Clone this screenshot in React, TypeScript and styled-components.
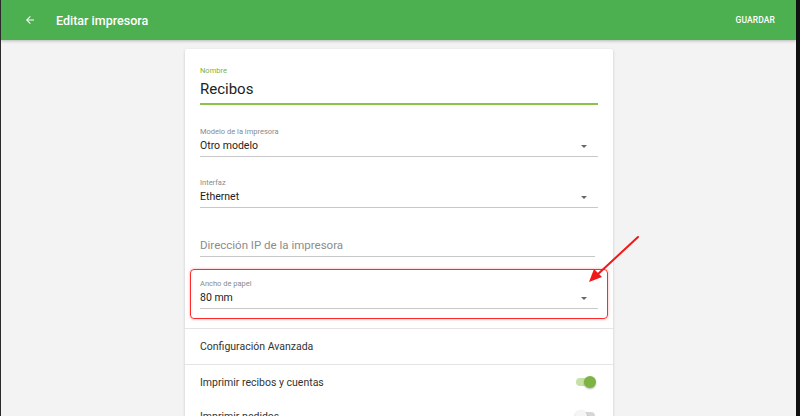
import React from 'react';
import styled, { createGlobalStyle } from 'styled-components';

const GlobalStyle = createGlobalStyle`
  html, body {
    margin: 0;
    padding: 0;
    height: 100%;
    overflow: hidden;
  }
  body {
    font-family: Roboto, "Noto Sans", Arial, sans-serif;
    background: #f3f3f3;
  }
`;

const Screen = styled.div`
  position: relative;
  width: 800px;
  height: 416px;
  box-sizing: border-box;
  border-left: 1px solid #2a2a2a;
  border-right: 4px solid #111;
  background: #f3f3f3;
  overflow: hidden;
  display: flex;
  flex-direction: column;
`;

const AppBar = styled.header`
  height: 40px;
  flex-shrink: 0;
  background: #4caf50;
  display: flex;
  align-items: center;
  padding: 0 20px 0 21px;
  box-shadow: 0 1px 3px rgba(0, 0, 0, 0.25);
  z-index: 2;
`;

const BackButton = styled.button`
  width: 16px;
  height: 16px;
  padding: 0;
  border: none;
  background: transparent;
  display: flex;
  align-items: center;
  justify-content: center;
  cursor: pointer;
`;

const Title = styled.h1`
  margin: 0 0 0 18px;
  font-size: 12.5px;
  font-weight: 500;
  color: #fff;
  flex: 1;
`;

const SaveButton = styled.button`
  border: none;
  background: transparent;
  color: #fff;
  font-family: Roboto, sans-serif;
  font-size: 8.5px;
  font-weight: 500;
  letter-spacing: 0.1px;
  padding: 0;
  margin-right: 1px;
  cursor: pointer;
`;

const Content = styled.main`
  flex: 1;
  display: flex;
  justify-content: center;
  padding: 9px 3px 0 4px;
`;

const Card = styled.section`
  width: 428px;
  background: #fff;
  box-shadow: 0 1px 3px rgba(0, 0, 0, 0.18);
  border-radius: 2px;
  display: flex;
  flex-direction: column;
  align-self: flex-start;
`;

const Form = styled.div`
  display: flex;
  flex-direction: column;
  padding: 16px 15px 19px;
`;

const Field = styled.div<{ $highlight?: boolean; $gap: number }>`
  position: relative;
  display: flex;
  flex-direction: column;
  margin-top: ${p => p.$gap}px;
  ${p => p.$highlight && `
    &::after {
      content: '';
      position: absolute;
      left: -10px;
      right: -10px;
      top: -9px;
      bottom: -10px;
      border: 1.5px solid #ff2a2a;
      border-radius: 4px;
      box-shadow: 0 0 3px rgba(255, 0, 0, 0.35);
      pointer-events: none;
    }
  `}
`;

const Label = styled.span<{ $focused?: boolean }>`
  font-size: 7.5px;
  line-height: 11px;
  color: ${p => (p.$focused ? '#7cb342' : '#8a8a8a')};
`;

const Row = styled.div<{ $underline: 'focus' | 'normal'; $inset?: number; $big?: boolean }>`
  display: flex;
  align-items: center;
  justify-content: space-between;
  margin-top: ${p => (p.$big ? 3 : 1)}px;
  border-bottom: ${p => (p.$underline === 'focus' ? '2px solid #8bc34a' : '1px solid #c8c8c8')};
  margin-right: ${p => p.$inset ?? 0}px;
`;

const Value = styled.span<{ $big?: boolean; $placeholder?: boolean }>`
  font-size: ${p => (p.$big ? '15px' : p.$placeholder ? '11.5px' : '10.5px')};
  line-height: ${p => (p.$big ? '20px' : '15px')};
  padding-bottom: ${p => (p.$big ? '4px' : '3px')};
  color: ${p => (p.$placeholder ? '#8c8c8c' : '#222')};
`;

const Caret = styled.span`
  width: 0;
  height: 0;
  margin-right: 11px;
  margin-bottom: 2px;
  border-left: 3.5px solid transparent;
  border-right: 3.5px solid transparent;
  border-top: 3.5px solid #666;
`;

const Section = styled.div`
  display: flex;
  align-items: center;
  height: 35px;
  padding: 0 15px;
  border-top: 1px solid #e4e4e4;
  border-bottom: 1px solid #e4e4e4;
  font-size: 10.5px;
  color: #333;
`;

const SwitchRow = styled.div`
  display: flex;
  align-items: center;
  justify-content: space-between;
  height: 34px;
  flex-shrink: 0;
  padding: 0 15px;
  font-size: 10.5px;
  color: #333;
`;

const Toggle = styled.span<{ $on?: boolean }>`
  position: relative;
  width: 19px;
  height: 8px;
  margin-right: 3px;
  border-radius: 4px;
  background: ${p => (p.$on ? '#c5e1a5' : '#d6d6d6')};
  &::after {
    content: '';
    position: absolute;
    top: -2px;
    left: ${p => (p.$on ? '8px' : '-1px')};
    width: 12px;
    height: 12px;
    border-radius: 50%;
    background: ${p => (p.$on ? '#7cb342' : '#f5f5f5')};
    box-shadow: 0 1px 2px rgba(0, 0, 0, 0.3);
  }
`;

const Annotation = styled.svg`
  position: absolute;
  left: 584px;
  top: 234px;
  pointer-events: none;
`;

const selects = [
  { label: 'Modelo de la impresora', value: 'Otro modelo', gap: 21 },
  { label: 'Interfaz', value: 'Ethernet', gap: 20 },
];

export default function App() {
  return (
    <>
      <GlobalStyle />
      <Screen>
        <AppBar>
          <BackButton aria-label="Volver">
            <svg width="12" height="12" viewBox="0 0 24 24">
              <path d="M20 11H7.83l5.59-5.59L12 4l-8 8 8 8 1.41-1.41L7.83 13H20v-2z" fill="#fff" />
            </svg>
          </BackButton>
          <Title>Editar impresora</Title>
          <SaveButton>GUARDAR</SaveButton>
        </AppBar>
        <Content>
          <Card>
            <Form>
              <Field $gap={0}>
                <Label $focused>Nombre</Label>
                <Row $underline="focus" $big>
                  <Value $big>Recibos</Value>
                </Row>
              </Field>
              {selects.map(f => (
                <Field key={f.label} $gap={f.gap}>
                  <Label>{f.label}</Label>
                  <Row $underline="normal">
                    <Value>{f.value}</Value>
                    <Caret />
                  </Row>
                </Field>
              ))}
              <Field $gap={29}>
                <Row $underline="normal" $inset={3}>
                  <Value $placeholder>Dirección IP de la impresora</Value>
                </Row>
              </Field>
              <Field $gap={21} $highlight>
                <Label>Ancho de papel</Label>
                <Row $underline="normal">
                  <Value>80 mm</Value>
                  <Caret />
                </Row>
              </Field>
            </Form>
            <Section>Configuración Avanzada</Section>
            <SwitchRow>
              Imprimir recibos y cuentas
              <Toggle $on />
            </SwitchRow>
            <SwitchRow>
              Imprimir pedidos
              <Toggle />
            </SwitchRow>
          </Card>
        </Content>
        <Annotation width="60" height="52" viewBox="0 0 60 52">
          <line x1="53" y1="3" x2="12" y2="41" stroke="#f01818" strokeWidth="2" strokeLinecap="round" />
          <polygon points="4,48 9,35 17,43" fill="#f01818" />
        </Annotation>
      </Screen>
    </>
  );
}
